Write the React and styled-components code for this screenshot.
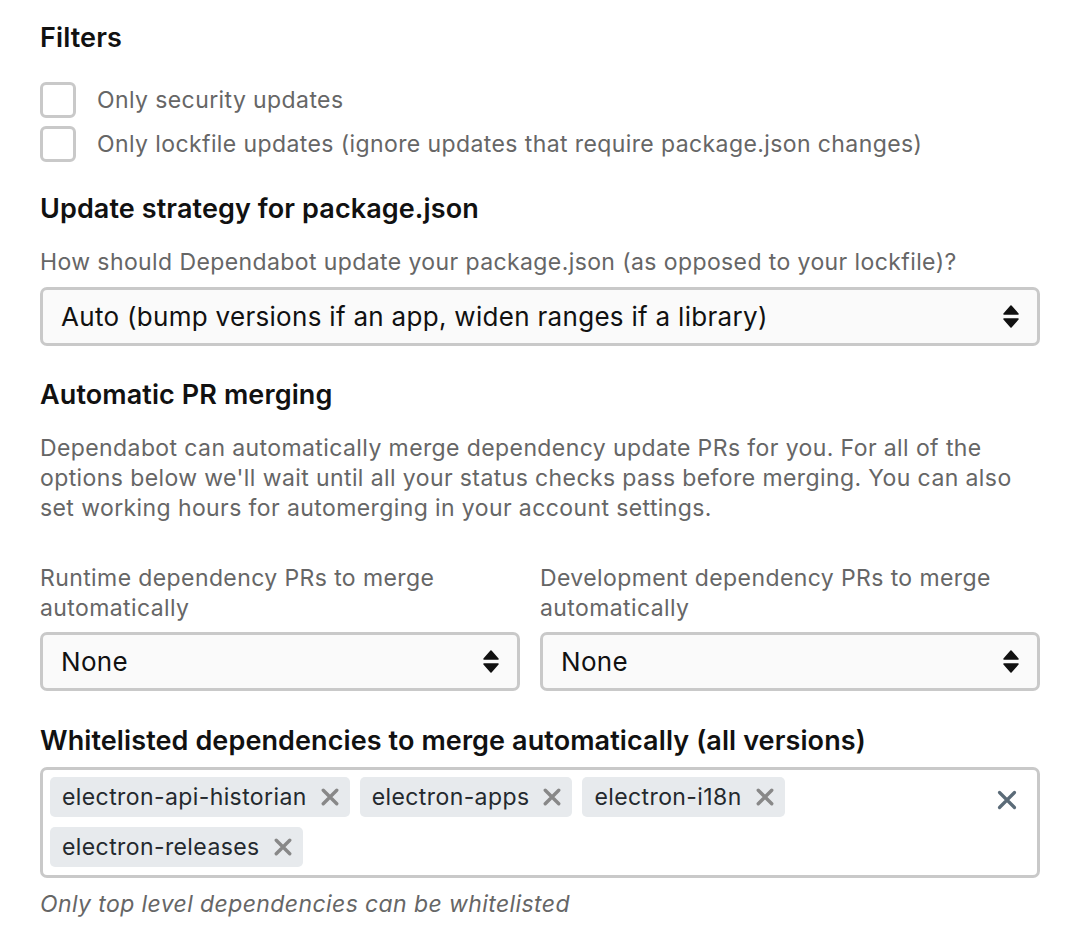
import React from 'react'
import styled, { createGlobalStyle } from 'styled-components'

const GlobalStyle = createGlobalStyle`
  body {
    margin: 0;
    background: #fff;
    font-family: Inter, "Liberation Sans", Arial, sans-serif;
  }
`

const Page = styled.div`
  width: 1000px;
  padding: 20px 28px 20px 40px;
  color: #24292e;
`

const Heading = styled.h3`
  margin: 0;
  font-size: 27px;
  line-height: 36px;
  font-weight: 600;
  letter-spacing: 0.1px;
  color: #111;
`

const CheckList = styled.div`
  margin-top: 26px;
  display: flex;
  flex-direction: column;
  gap: 8px;
`

const CheckRow = styled.label`
  display: flex;
  align-items: center;
  gap: 21px;
  font-size: 23px;
  letter-spacing: 0.4px;
  color: #666;
`

const Box = styled.span`
  width: 30px;
  height: 30px;
  border: 3px solid #c9c9c9;
  border-radius: 6px;
  background: #fff;
`

const Section = styled.div`
  margin-top: ${p => p.top || 30}px;
`

const Hint = styled.p`
  margin: 20px 0 10px;
  font-size: 23px;
  line-height: 30px;
  letter-spacing: 0.4px;
  color: #666;
`

const Paragraph = styled.p`
  margin: 20px 0 0;
  font-size: 23px;
  line-height: 30px;
  letter-spacing: 0.4px;
  color: #666;
`

const Select = styled.div`
  box-sizing: border-box;
  height: 59px;
  display: flex;
  align-items: center;
  justify-content: space-between;
  padding: 0 18px 0 18px;
  border: 3px solid #c9c9c9;
  border-radius: 7px;
  background: #fafafa;
  font-size: 26px;
  letter-spacing: 0.3px;
  color: #111;
`

const Arrows = () => (
  <svg width="16" height="24" viewBox="0 0 16 24">
    <path d="M8 1 L15 9 L1 9 Z" fill="#111" strokeLinejoin="round" stroke="#111" strokeWidth="1.5" />
    <path d="M1 14 L15 14 L8 22 Z" fill="#111" strokeLinejoin="round" stroke="#111" strokeWidth="1.5" />
  </svg>
)

const Columns = styled.div`
  margin-top: 40px;
  display: grid;
  grid-template-columns: 480px 1fr;
  column-gap: 20px;
`

const Column = styled.div`
  display: flex;
  flex-direction: column;
`

const FieldLabel = styled.div`
  font-size: 23px;
  line-height: 30px;
  letter-spacing: 0.4px;
  color: #666;
  margin-bottom: 9px;
`

const TagBox = styled.div`
  box-sizing: border-box;
  margin-top: 8px;
  min-height: 108px;
  border: 3px solid #c9c9c9;
  border-radius: 7px;
  padding: 7px 20px 8px 7px;
  display: flex;
  align-items: flex-start;
`

const Tags = styled.div`
  flex: 1;
  display: flex;
  flex-wrap: wrap;
  gap: 10px;
`

const Tag = styled.span`
  display: inline-flex;
  align-items: center;
  height: 40px;
  padding: 0 11px 0 12px;
  gap: 14px;
  border-radius: 5px;
  background: #e7eaed;
  font-size: 23px;
  letter-spacing: 0.4px;
  color: #24292e;
`

const Clear = styled.span`
  margin-top: 13px;
  display: flex;
`

const Help = styled.div`
  margin-top: 11px;
  font-size: 23px;
  line-height: 30px;
  letter-spacing: 0.4px;
  font-style: italic;
  color: #666;
`

const Cross = ({ size, color, width }) => (
  <svg width={size} height={size} viewBox="0 0 16 16">
    <path d="M2 2 L14 14 M14 2 L2 14" stroke={color} strokeWidth={width} strokeLinecap="round" />
  </svg>
)

const tags = ['electron-api-historian', 'electron-apps', 'electron-i18n', 'electron-releases']

export default function App() {
  return (
    <>
      <GlobalStyle />
      <Page>
        <Heading>Filters</Heading>
        <CheckList>
          <CheckRow><Box />Only security updates</CheckRow>
          <CheckRow><Box />Only lockfile updates (ignore updates that require package.json changes)</CheckRow>
        </CheckList>

        <Section top={29}>
          <Heading>Update strategy for package.json</Heading>
          <Hint>How should Dependabot update your package.json (as opposed to your lockfile)?</Hint>
          <Select>
            <span>Auto (bump versions if an app, widen ranges if a library)</span>
            <Arrows />
          </Select>
        </Section>

        <Section top={31}>
          <Heading>Automatic PR merging</Heading>
          <Paragraph>
            Dependabot can automatically merge dependency update PRs for you. For all of the options below we'll wait until all your status checks pass before merging. You can also set working hours for automerging in your account settings.
          </Paragraph>
          <Columns>
            <Column>
              <FieldLabel>Runtime dependency PRs to merge automatically</FieldLabel>
              <Select><span>None</span><Arrows /></Select>
            </Column>
            <Column>
              <FieldLabel>Development dependency PRs to merge automatically</FieldLabel>
              <Select><span>None</span><Arrows /></Select>
            </Column>
          </Columns>
        </Section>

        <Section top={32}>
          <Heading>Whitelisted dependencies to merge automatically (all versions)</Heading>
          <TagBox>
            <Tags>
              {tags.map(t => (
                <Tag key={t}>{t}<Cross size={18} color="#888" width={3} /></Tag>
              ))}
            </Tags>
            <Clear><Cross size={20} color="#5b6b78" width={2.6} /></Clear>
          </TagBox>
          <Help>Only top level dependencies can be whitelisted</Help>
        </Section>
      </Page>
    </>
  )
}
